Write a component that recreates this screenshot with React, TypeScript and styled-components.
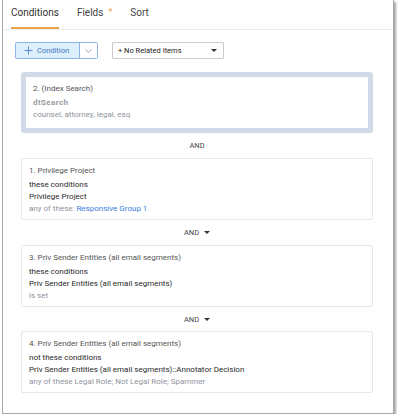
import React from 'react';
import styled, { createGlobalStyle } from 'styled-components';

const GlobalStyle = createGlobalStyle`
  html, body {
    margin: 0;
    padding: 0;
    background: #ffffff;
  }
  body {
    font-family: Roboto, "Liberation Sans", sans-serif;
    color: #222;
  }
`;

const Frame = styled.div`
  box-sizing: border-box;
  margin-left: 2px;
  width: 392px;
  height: 414px;
  border: 1px solid #a8a8a8;
  border-top: none;
  box-shadow: 2px 2px 2px rgba(0, 0, 0, 0.35);
  background: #fff;
  display: flex;
  flex-direction: column;
`;

const TabBar = styled.div`
  display: flex;
  gap: 18px;
  padding-left: 8px;
  height: 29px;
  border-bottom: 1px solid #e8edf2;
`;

const Tab = styled.div<{ $active?: boolean }>`
  position: relative;
  display: flex;
  align-items: center;
  height: 29px;
  padding-bottom: 2px;
  box-sizing: border-box;
  font-size: 10px;
  color: ${(p) => (p.$active ? '#333' : '#444')};
  border-bottom: 2px solid ${(p) => (p.$active ? '#f0a044' : 'transparent')};
`;

const Star = styled.span`
  color: #f0a044;
  font-size: 9px;
  margin-left: 5px;
  align-self: flex-start;
  margin-top: 7px;
`;

const Toolbar = styled.div`
  display: flex;
  align-items: center;
  gap: 14px;
  padding: 12px 0 0 12px;
`;

const SplitButton = styled.div`
  display: flex;
  height: 17px;
  box-sizing: border-box;
  border: 1px solid #8fb5e6;
  border-radius: 2px;
`;

const MainButton = styled.div`
  display: flex;
  align-items: center;
  gap: 4px;
  width: 64px;
  padding-left: 8px;
  box-sizing: border-box;
  background: #ddeffa;
  color: #3f78c6;
  font-size: 7.5px;
  border-right: 1px solid #8fb5e6;
`;

const Toggle = styled.div`
  width: 17px;
  display: flex;
  align-items: center;
  justify-content: center;
  background: #fff;
`;

const Select = styled.div`
  display: flex;
  align-items: center;
  justify-content: space-between;
  width: 112px;
  height: 17px;
  box-sizing: border-box;
  padding: 0 6px 0 5px;
  border: 1px solid #c9cdd3;
  border-radius: 1px;
  font-size: 7.5px;
  color: #222;
`;

const Caret = styled.span`
  width: 0;
  height: 0;
  border-left: 3px solid transparent;
  border-right: 3px solid transparent;
  border-top: 3px solid #333;
`;

const Content = styled.div`
  display: flex;
  flex-direction: column;
  padding: 13px 20px 0 18px;
`;

const Card = styled.div<{ $selected?: boolean }>`
  box-sizing: border-box;
  border: ${(p) => (p.$selected ? '5px solid #d0dbe7' : '1px solid #e4e8ee')};
  border-radius: ${(p) => (p.$selected ? '3px' : '2px')};
  padding: ${(p) => (p.$selected ? '6px 7px 7px 7px' : '6px 8px 4px 7px')};
  background: #fff;
`;

const Line = styled.div<{ $tone?: 'title' | 'body' | 'muted' | 'strong' }>`
  font-size: 8px;
  line-height: 12px;
  white-space: nowrap;
  font-weight: ${(p) => (p.$tone === 'strong' ? 700 : 400)};
  letter-spacing: ${(p) => (p.$tone === 'strong' ? '0.4px' : '0')};
  color: ${(p) =>
    p.$tone === 'title'
      ? '#555'
      : p.$tone === 'muted'
      ? '#8f949c'
      : p.$tone === 'strong'
      ? '#989ca4'
      : '#2a2a2a'};
`;

const TitleLine = styled(Line)`
  margin-bottom: 2px;
`;

const Link = styled.span`
  color: #3a7fdc;
`;

const Connector = styled.div<{ $short?: boolean }>`
  height: ${(p) => (p.$short ? '24px' : '25px')};
  display: flex;
  align-items: center;
  justify-content: center;
  gap: 5px;
  font-size: 7.5px;
  color: #444;
`;

const PlusIcon = () => (
  <svg width="9" height="9" viewBox="0 0 9 9">
    <path d="M4.5 0.5v8M0.5 4.5h8" stroke="#4a7fc8" strokeWidth="0.9" fill="none" />
  </svg>
);

const ChevronIcon = () => (
  <svg width="7" height="4" viewBox="0 0 7 4">
    <path d="M0.5 0.5l3 3l3-3" stroke="#6f8fb8" strokeWidth="0.8" fill="none" />
  </svg>
);

type Condition = {
  title: string;
  mode: string;
  field: string;
  detail: React.ReactNode;
};

const conditions: Condition[] = [
  {
    title: '1. Privilege Project',
    mode: 'these conditions',
    field: 'Privilege Project',
    detail: (
      <>
        any of these: <Link>Responsive Group 1</Link>
      </>
    ),
  },
  {
    title: '3. Priv Sender Entities (all email segments)',
    mode: 'these conditions',
    field: 'Priv Sender Entities (all email segments)',
    detail: 'is set',
  },
  {
    title: '4. Priv Sender Entities (all email segments)',
    mode: 'not these conditions',
    field: 'Priv Sender Entities (all email segments)::Annotator Decision',
    detail: 'any of these Legal Role; Not Legal Role; Spammer',
  },
];

const App: React.FC = () => {
  return (
    <>
      <GlobalStyle />
      <Frame>
        <TabBar>
          <Tab $active>Conditions</Tab>
          <Tab>
            Fields<Star>*</Star>
          </Tab>
          <Tab>Sort</Tab>
        </TabBar>

        <Toolbar>
          <SplitButton>
            <MainButton>
              <PlusIcon />
              Condition
            </MainButton>
            <Toggle>
              <ChevronIcon />
            </Toggle>
          </SplitButton>
          <Select>
            + No Related Items
            <Caret />
          </Select>
        </Toolbar>

        <Content>
          <Card $selected>
            <TitleLine $tone="title">2. (Index Search)</TitleLine>
            <Line $tone="strong">dtSearch</Line>
            <Line $tone="muted">counsel, attorney, legal, esq</Line>
          </Card>
          <Connector>AND</Connector>

          {conditions.map((c, i) => (
            <React.Fragment key={c.title}>
              <Card>
                <TitleLine $tone="title">{c.title}</TitleLine>
                <Line>{c.mode}</Line>
                <Line>{c.field}</Line>
                <Line $tone="muted">{c.detail}</Line>
              </Card>
              {i < conditions.length - 1 && (
                <Connector $short={i === 1}>
                  AND <Caret />
                </Connector>
              )}
            </React.Fragment>
          ))}
        </Content>
      </Frame>
    </>
  );
};

export default App;
